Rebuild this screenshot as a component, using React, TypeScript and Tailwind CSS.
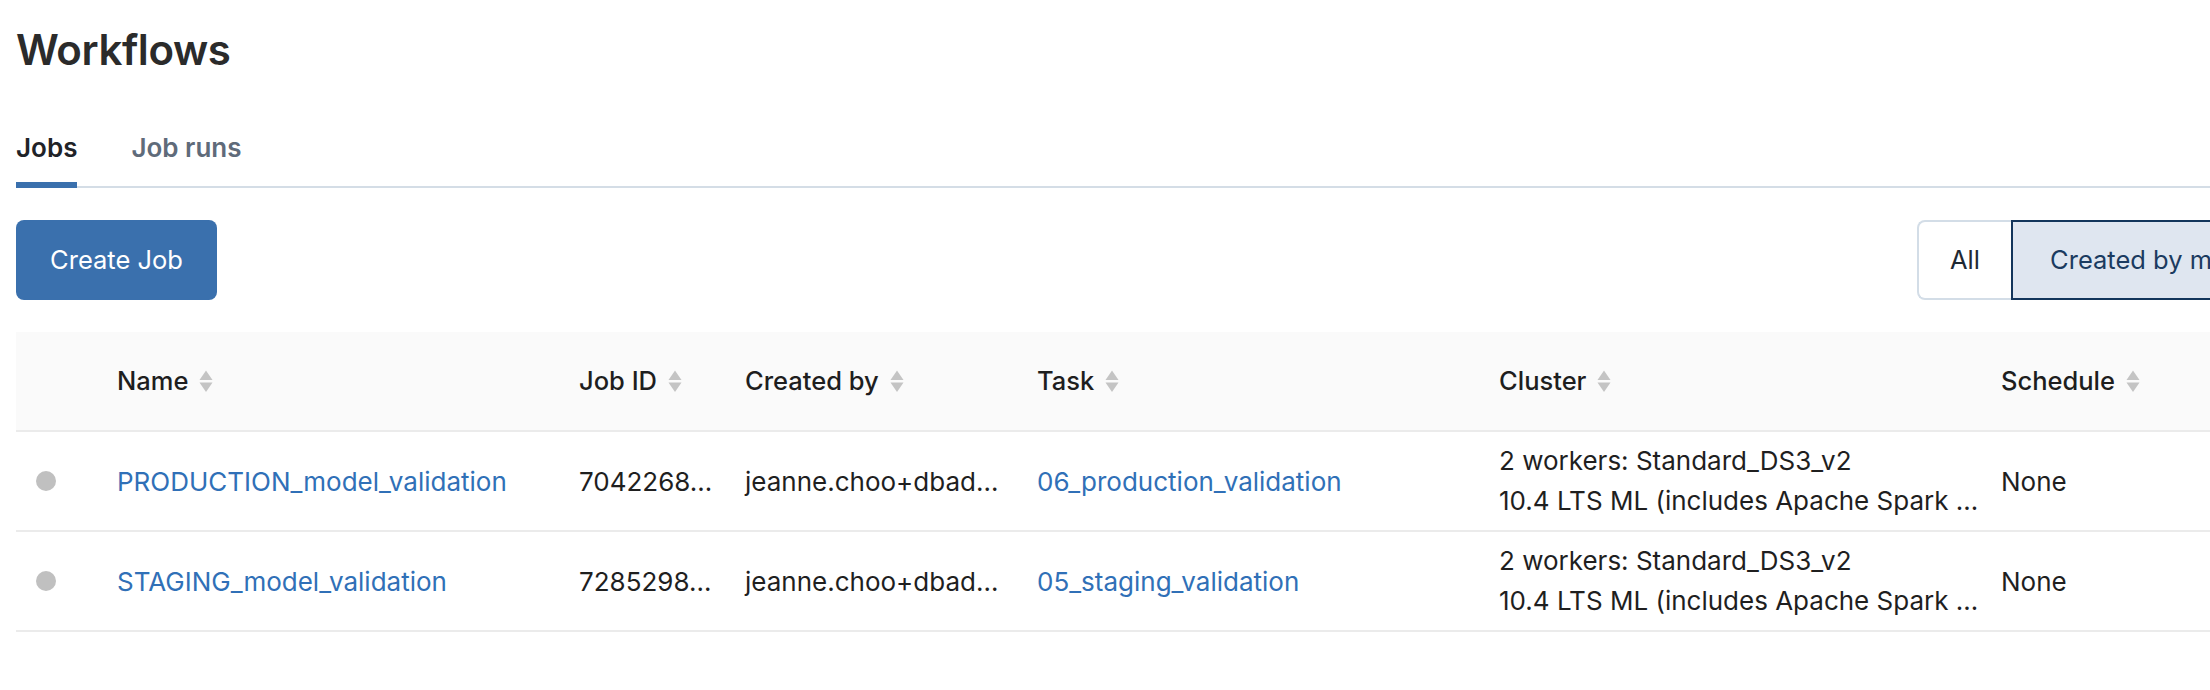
import React from 'react';

const cols = 'grid grid-cols-[101px_462px_166px_292px_462px_502px_1fr] items-center';

const jobs = [
  {
    name: 'PRODUCTION_model_validation',
    id: '7042268…',
    creator: 'jeanne.choo+dbad…',
    task: '06_production_validation',
    workers: '2 workers: Standard_DS3_v2',
    runtime: '10.4 LTS ML (includes Apache Spark …',
    schedule: 'None',
  },
  {
    name: 'STAGING_model_validation',
    id: '7285298…',
    creator: 'jeanne.choo+dbad…',
    task: '05_staging_validation',
    workers: '2 workers: Standard_DS3_v2',
    runtime: '10.4 LTS ML (includes Apache Spark …',
    schedule: 'None',
  },
];

function SortIcon() {
  return (
    <svg width="14" height="22" viewBox="0 0 14 22" className="shrink-0">
      <path d="M7 0.5 L13.5 10 L0.5 10 Z" fill="#c4c4c4" />
      <path d="M0.5 12.5 L13.5 12.5 L7 22 Z" fill="#c4c4c4" />
    </svg>
  );
}

function HeaderCell({ label }: { label: string }) {
  return (
    <div className="flex items-center gap-[11px]">
      <span>{label}</span>
      <SortIcon />
    </div>
  );
}

export default function App() {
  return (
    <div className="w-[2210px] h-[690px] overflow-hidden bg-white font-['Inter','Liberation_Sans',sans-serif] text-[#1f1f1f]">
      <div className="w-[2266px] pl-4 pt-[25px]">
        <h1 className="text-[42px] leading-[50px] font-semibold text-[#2b2b2b] tracking-[-0.4px]">Workflows</h1>

        {/* tabs */}
        <div className="mt-[57px] flex gap-[54px] border-b-2 border-[#d4dde6]">
          <div className="relative pb-[22px] text-[26px] leading-[32px] font-semibold text-[#1f2328]">
            Jobs
            <span className="absolute left-0 right-0 bottom-[-2px] h-[6px] bg-[#3a70ad]" />
          </div>
          <div className="pb-[22px] text-[26px] leading-[32px] font-semibold text-[#5f6b7a]">Job runs</div>
        </div>

        {/* toolbar */}
        <div className="mt-[32px] flex items-start justify-between">
          <button className="h-[80px] w-[201px] rounded-[8px] bg-[#3a70ad] text-white text-[25.5px]">
            Create Job
          </button>
          <div className="flex h-[80px] text-[25.5px]">
            <button className="w-[94px] rounded-l-[8px] border-2 border-r-0 border-[#d3dde7] text-[#1f2933]">All</button>
            <button className="w-[255px] border-2 border-[#13355b] bg-[#dfe6f0] text-[#1b3b60]">Created by me</button>
          </div>
        </div>

        {/* table */}
        <div className="mt-[32px] text-[26px]">
          <div className={`${cols} h-[100px] bg-[#fafafa] border-b-2 border-[#ebebeb] text-[25.5px] font-medium text-[#1e1e1e]`}>
            <div />
            <HeaderCell label="Name" />
            <HeaderCell label="Job ID" />
            <HeaderCell label="Created by" />
            <HeaderCell label="Task" />
            <HeaderCell label="Cluster" />
            <HeaderCell label="Schedule" />
          </div>
          {jobs.map((job) => (
            <div key={job.name} className={`${cols} h-[100px] border-b-2 border-[#ebebeb]`}>
              <div className="pl-5">
                <div className="w-5 h-5 rounded-full bg-[#c0c0c0]" />
              </div>
              <a className="text-[#3070b7] whitespace-nowrap">{job.name}</a>
              <div className="whitespace-nowrap">{job.id}</div>
              <div className="whitespace-nowrap">{job.creator}</div>
              <a className="text-[#3070b7] whitespace-nowrap">{job.task}</a>
              <div className="leading-[40px] whitespace-nowrap">
                <div>{job.workers}</div>
                <div>{job.runtime}</div>
              </div>
              <div>{job.schedule}</div>
            </div>
          ))}
        </div>
      </div>
    </div>
  );
}
